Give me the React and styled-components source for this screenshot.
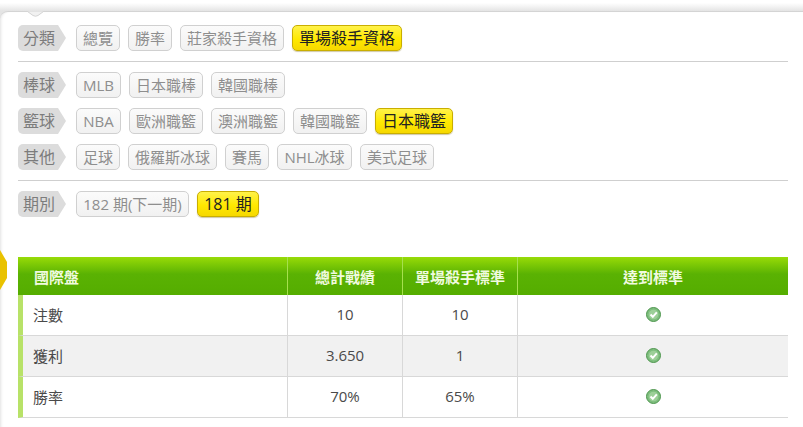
import React from 'react';
import styled, { createGlobalStyle } from 'styled-components';

const GlobalStyle = createGlobalStyle`
  html, body {
    margin: 0;
    padding: 0;
    background: #fff;
    overflow: hidden;
  }
  body {
    font-family: "Open Sans", "Noto Sans CJK TC", sans-serif;
  }
`;

const Page = styled.div`
  position: relative;
  width: 803px;
  height: 427px;
  overflow: hidden;
  background: linear-gradient(to bottom, #fff 0, #fff 3px, #e4e4e4 11px);
`;

const Panel = styled.div`
  position: relative;
  height: 416px;
  margin-top: 11px;
  box-sizing: border-box;
  padding: 13px 15px 0 18px;
  background: #fff;
  border-top: 1px solid #d4d4d4;
  border-top-left-radius: 8px;
  box-shadow: inset 3px 0 3px -2px #e2e2e2;
`;

const Notch = styled.svg`
  position: absolute;
  top: -1px;
  left: 27px;
`;

const Row = styled.div`
  display: flex;
  gap: 8px;
  height: 26px;
  margin-bottom: 10px;
`;

const Divider = styled.hr`
  height: 1px;
  margin: 0 0 10px;
  border: 0;
  background: #cfcfcf;
`;

const Label = styled.div`
  box-sizing: border-box;
  width: 48px;
  height: 26px;
  margin-right: 2px;
  padding-left: 5px;
  background: #dcdcdc;
  color: #7c7c7c;
  font-size: 16px;
  line-height: 26px;
  border-radius: 5px 0 0 5px;
  clip-path: polygon(0 0, 40px 0, 48px 50%, 40px 100%, 0 100%);
`;

const Tag = styled.div`
  box-sizing: border-box;
  height: 26px;
  width: ${(p) => p.$w}px;
  text-align: center;
  font-size: ${(p) => (p.$on ? 16 : 15)}px;
  line-height: 24px;
  white-space: nowrap;
  border-radius: 5px;
  border: 1px solid ${(p) => (p.$on ? '#c9ae00' : '#d0d0d0')};
  color: ${(p) => (p.$on ? '#222' : '#8e8e8e')};
  background: ${(p) =>
    p.$on
      ? 'linear-gradient(to bottom, #fff24a, #ffe900 55%, #f6d800)'
      : 'linear-gradient(to bottom, #fbfbfb, #f1f1f1)'};
  box-shadow: ${(p) => (p.$on ? '0 1px 1px rgba(120, 100, 0, 0.35)' : 'none')};
`;

const Table = styled.table`
  width: 770px;
  margin-top: 40px;
  border-collapse: separate;
  border-spacing: 0;
  table-layout: fixed;
`;

const Head = styled.th`
  height: 38px;
  padding: 0;
  font-size: 15px;
  font-weight: 700;
  color: #f0fadf;
  text-align: ${(p) => (p.$left ? 'left' : 'center')};
  padding-left: ${(p) => (p.$left ? '16px' : '0')};
  background: linear-gradient(to bottom, #98db07, #5ab203 45%, #55ad00);
  & + & {
    border-left: 1px solid #a6e04e;
  }
`;

const BodyRow = styled.tr`
  background: ${(p) => (p.$alt ? '#f1f1f1' : '#fff')};
`;

const Cell = styled.td`
  box-sizing: border-box;
  height: 41px;
  padding: 0 0 2px;
  font-size: 15px;
  color: #4a4a4a;
  text-align: center;
  border-bottom: 1px solid #d8d8d8;
  & + & {
    border-left: 1px solid #d8d8d8;
  }
`;

const NameCell = styled(Cell)`
  text-align: left;
  padding-left: 10px;
  border-left: 5px solid #b8e268;
`;

const LeftMark = styled.span`
  position: absolute;
  left: -8px;
  top: 238px;
  width: 15px;
  height: 40px;
  background: #e9c200;
  clip-path: polygon(0 0, 8px 0, 15px 30%, 15px 70%, 8px 100%, 0 100%);
`;

const IconWrap = styled.span`
  display: inline-block;
  width: 15px;
  height: 15px;
  position: relative;
  top: -2px;
  vertical-align: middle;
`;

const CheckIcon = () => (
  <IconWrap>
    <svg width="15" height="15" viewBox="0 0 15 15">
      <circle cx="7.5" cy="7.5" r="7" fill="#7dbd7d" stroke="#4f964f" />
      <circle cx="7.5" cy="7.5" r="4.8" fill="#9ccf98" />
      <path d="M4.5 7.5 L6.8 9.8 L10.8 5.4" fill="none" stroke="#fff" strokeWidth="2" />
    </svg>
  </IconWrap>
);

const filters = [
  ['棒球', [['MLB', 45], ['日本職棒', 74], ['韓國職棒', 74]]],
  ['籃球', [['NBA', 45], ['歐洲職籃', 74], ['澳洲職籃', 74], ['韓國職籃', 74], ['日本職籃', 78, true]]],
  ['其他', [['足球', 44], ['俄羅斯冰球', 89], ['賽馬', 44], ['NHL冰球', 75], ['美式足球', 74]]],
];

const stats = [
  ['注數', '10', '10'],
  ['獲利', '3.650', '1'],
  ['勝率', '70%', '65%'],
];

const renderTags = (tags) =>
  tags.map(([text, w, on]) => (
    <Tag key={text} $w={w} $on={on}>
      {text}
    </Tag>
  ));

export default function App() {
  return (
    <Page>
      <GlobalStyle />
      <Panel>
        <Notch width="17" height="7" viewBox="0 0 17 7">
          <path d="M0.5 0.5 L6 4.5 Q8.5 6 11 4.5 L16.5 0.5" fill="#f1f1f1" stroke="#d4d4d4" />
        </Notch>
        <LeftMark />
        <Row>
          <Label>分類</Label>
          {renderTags([['總覽', 44], ['勝率', 44], ['莊家殺手資格', 104], ['單場殺手資格', 110, true]])}
        </Row>
        <Divider />
        {filters.map(([label, tags]) => (
          <Row key={label}>
            <Label>{label}</Label>
            {renderTags(tags)}
          </Row>
        ))}
        <Divider />
        <Row>
          <Label>期別</Label>
          {renderTags([['182 期(下一期)', 113], ['181 期', 62, true]])}
        </Row>
        <Table>
          <colgroup>
            <col width="269" />
            <col width="115" />
            <col width="115" />
            <col width="271" />
          </colgroup>
          <thead>
            <tr>
              <Head $left>國際盤</Head>
              <Head>總計戰績</Head>
              <Head>單場殺手標準</Head>
              <Head>達到標準</Head>
            </tr>
          </thead>
          <tbody>
            {stats.map(([name, total, target], i) => (
              <BodyRow key={name} $alt={i === 1}>
                <NameCell>{name}</NameCell>
                <Cell>{total}</Cell>
                <Cell>{target}</Cell>
                <Cell>
                  <CheckIcon />
                </Cell>
              </BodyRow>
            ))}
          </tbody>
        </Table>
      </Panel>
    </Page>
  );
}
